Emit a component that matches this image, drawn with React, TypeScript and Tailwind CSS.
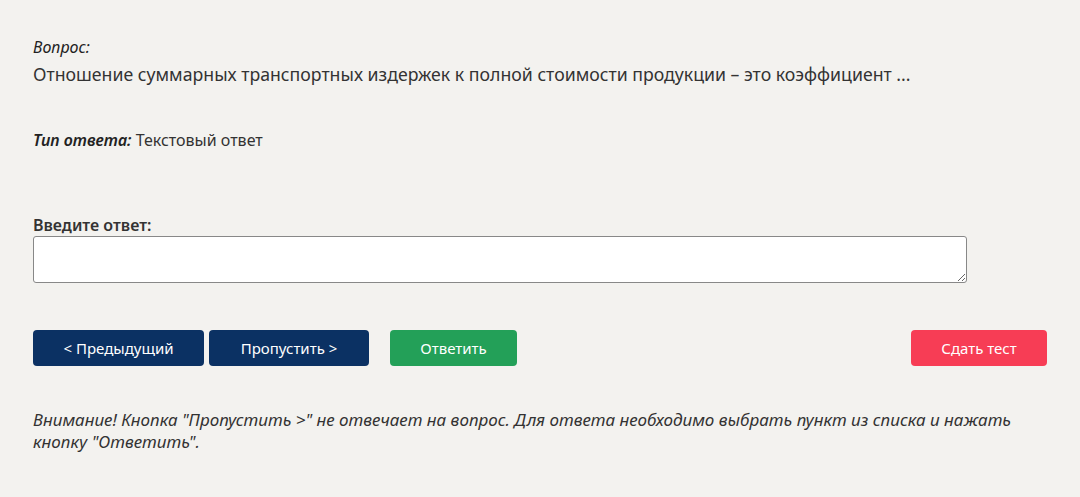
import React, { useState } from 'react';

export default function App() {
    const [answer, setAnswer] = useState('');

    return (
        <div className="min-h-[497px] bg-[#f3f2ef] text-[#222] px-[33px] pt-[36px] font-['Noto_Sans',sans-serif]">
            {/* Question */}
            <div className="italic text-[16px] leading-[22px]">Вопрос:</div>
            <p className="mt-[2px] text-[17.7px] leading-[28px] text-[#333]">
                Отношение суммарных транспортных издержек к полной стоимости продукции – это коэффициент ...
            </p>

            {/* Answer type */}
            <p className="mt-[40px] text-[16px] leading-[24px]">
                <span className="italic font-semibold">Тип ответа:</span>{' '}
                <span className="text-[#333]">Текстовый ответ</span>
            </p>

            {/* Input */}
            <label className="block mt-[62px] text-[16px] leading-[22px] font-semibold text-[#333]">
                Введите ответ:
            </label>
            <textarea
                value={answer}
                onChange={(e) => setAnswer(e.target.value)}
                className="block w-[934px] h-[47px] bg-white border border-[#888] rounded-[3px] px-2 py-1 text-[15px] focus:outline-none"
            />

            {/* Buttons */}
            <div className="flex items-center mt-[47px] h-[36px]">
                <button className="w-[171px] h-[36px] rounded-[4px] bg-[#0b3163] text-white text-[15px]">
                    &lt; Предыдущий
                </button>
                <button className="ml-[5px] w-[160px] h-[36px] rounded-[4px] bg-[#0b3163] text-white text-[15px]">
                    Пропустить &gt;
                </button>
                <button className="ml-[21px] w-[127px] h-[36px] rounded-[4px] bg-[#23a058] text-white text-[15px]">
                    Ответить
                </button>
                <button className="ml-auto w-[136px] h-[36px] rounded-[4px] bg-[#f73d55] text-white text-[15px]">
                    Сдать тест
                </button>
            </div>

            {/* Note */}
            <p className="mt-[43px] italic text-[17px] leading-[22px] text-[#333]">
                Внимание! Кнопка "Пропустить &gt;" не отвечает на вопрос. Для ответа необходимо выбрать пункт из списка и нажать кнопку "Ответить".
            </p>
        </div>
    );
}
